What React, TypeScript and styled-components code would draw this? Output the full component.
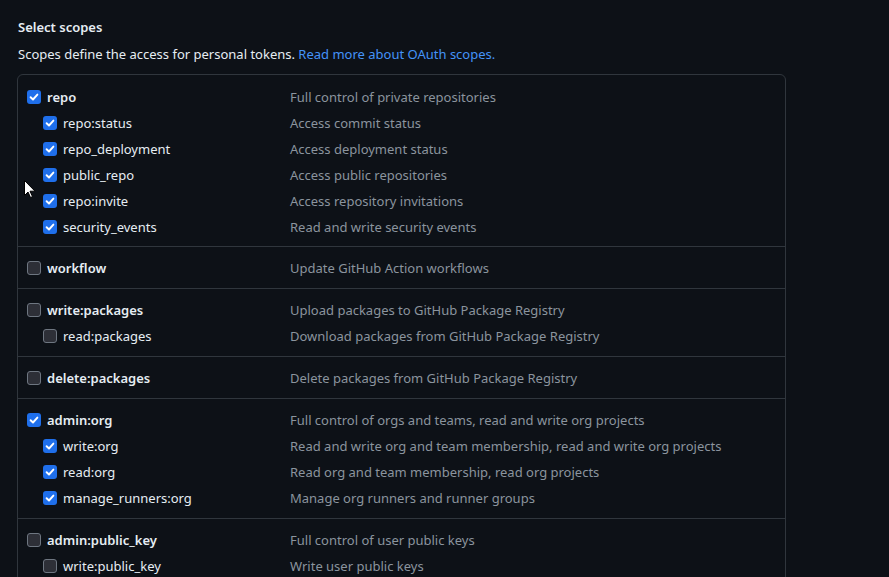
import React from "react";
import styled, { createGlobalStyle } from "styled-components";

const Global = createGlobalStyle`
  html, body { margin: 0; padding: 0; background: #0d1117; }
  body { font-family: "Noto Sans", "Open Sans", sans-serif; color: #e6edf3; overflow: hidden; }
  * { box-sizing: border-box; }
`;

const Page = styled.div`
  position: relative;
  width: 889px;
  height: 577px;
  overflow: hidden;
  padding: 17px 103px 0 17px;
`;

const Title = styled.h3`
  margin: 0 0 0 1px;
  font-size: 13px;
  line-height: 20px;
  font-weight: 600;
  color: #e6edf3;
`;

const Desc = styled.p`
  margin: 7px 0 10px 1px;
  font-size: 13px;
  line-height: 20px;
  color: #e6edf3;
`;

const Link = styled.a`
  color: #4493f8;
  text-decoration: none;
`;

const Box = styled.div`
  border: 1px solid #30363d;
  border-radius: 6px;
  width: 769px;
`;

const Group = styled.div`
  padding: 8px 0 7px;
  border-top: 1px solid #30363d;
  &:first-child { border-top: none; padding-top: 9px; padding-bottom: 6px; }
`;

const Row = styled.div<{ $child?: boolean }>`
  display: grid;
  grid-template-columns: 263px 1fr;
  align-items: center;
  height: 26px;
  padding-left: ${(p) => (p.$child ? 25 : 9)}px;
`;

const Label = styled.label<{ $child?: boolean }>`
  display: flex;
  align-items: center;
  gap: 6px;
  font-size: 13px;
  font-weight: ${(p) => (p.$child ? 400 : 600)};
  color: #e6edf3;
`;

const Note = styled.span<{ $child?: boolean }>`
  font-size: 13px;
  color: #8b949e;
  margin-left: ${(p) => (p.$child ? -16 : 0)}px;
`;

const Check = styled.span<{ $on: boolean }>`
  width: 14px;
  height: 14px;
  border-radius: 3px;
  display: inline-flex;
  align-items: center;
  justify-content: center;
  flex: none;
  background: ${(p) => (p.$on ? "#1f6feb" : "#2d2f37")};
  border: ${(p) => (p.$on ? "none" : "1.5px solid #6e7681")};
`;

const Cursor = styled.svg`
  position: absolute;
  left: 24px;
  top: 180px;
`;

type Scope = { name: string; desc: string; on: boolean; children?: { name: string; desc: string; on: boolean }[] };

const scopes: Scope[] = [
  {
    name: "repo", desc: "Full control of private repositories", on: true,
    children: [
      { name: "repo:status", desc: "Access commit status", on: true },
      { name: "repo_deployment", desc: "Access deployment status", on: true },
      { name: "public_repo", desc: "Access public repositories", on: true },
      { name: "repo:invite", desc: "Access repository invitations", on: true },
      { name: "security_events", desc: "Read and write security events", on: true },
    ],
  },
  { name: "workflow", desc: "Update GitHub Action workflows", on: false },
  {
    name: "write:packages", desc: "Upload packages to GitHub Package Registry", on: false,
    children: [{ name: "read:packages", desc: "Download packages from GitHub Package Registry", on: false }],
  },
  { name: "delete:packages", desc: "Delete packages from GitHub Package Registry", on: false },
  {
    name: "admin:org", desc: "Full control of orgs and teams, read and write org projects", on: true,
    children: [
      { name: "write:org", desc: "Read and write org and team membership, read and write org projects", on: true },
      { name: "read:org", desc: "Read org and team membership, read org projects", on: true },
      { name: "manage_runners:org", desc: "Manage org runners and runner groups", on: true },
    ],
  },
  {
    name: "admin:public_key", desc: "Full control of user public keys", on: false,
    children: [
      { name: "write:public_key", desc: "Write user public keys", on: false },
    ],
  },
];

function Box14({ on }: { on: boolean }) {
  return (
    <Check $on={on}>
      {on && (
        <svg width="10" height="10" viewBox="0 0 10 10">
          <path d="M1.6 5.2 L4 7.5 L8.4 2.6" fill="none" stroke="#fff" strokeWidth="1.9" strokeLinecap="round" strokeLinejoin="round" />
        </svg>
      )}
    </Check>
  );
}

export default function App() {
  return (
    <Page>
      <Global />
      <Title>Select scopes</Title>
      <Desc>
        Scopes define the access for personal tokens. <Link href="#">Read more about OAuth scopes.</Link>
      </Desc>
      <Box>
        {scopes.map((s) => (
          <Group key={s.name}>
            <Row>
              <Label><Box14 on={s.on} />{s.name}</Label>
              <Note>{s.desc}</Note>
            </Row>
            {s.children?.map((c) => (
              <Row key={c.name} $child>
                <Label $child><Box14 on={c.on} />{c.name}</Label>
                <Note $child>{c.desc}</Note>
              </Row>
            ))}
          </Group>
        ))}
      </Box>
      <Cursor width="12" height="19" viewBox="0 0 12 19">
        <path d="M0.5 0.5 L0.5 15.5 L4 12 L6.5 17.5 L8.5 16.6 L6 11.2 L11 11.2 Z" fill="#fff" stroke="#000" strokeWidth="1" strokeLinejoin="round" />
      </Cursor>
    </Page>
  );
}
